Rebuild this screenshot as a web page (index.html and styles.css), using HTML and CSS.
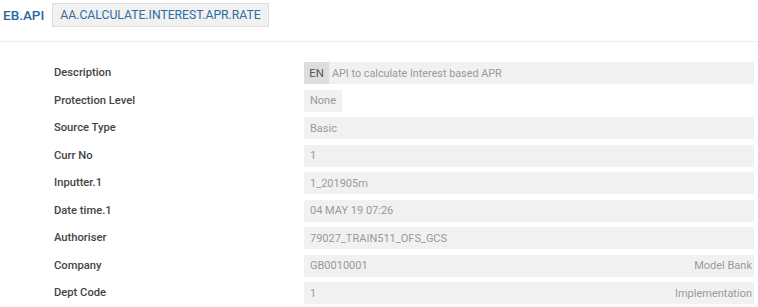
FILE: index.html
```html
<!DOCTYPE html>
<html>
<head>
<meta charset="utf-8">
<link rel="stylesheet" href="styles.css">
</head>
<body>
<div class="header">
  <span class="app">EB.API</span>
  <span class="recid">AA.CALCULATE.INTEREST.APR.RATE</span>
</div>
<div class="form">
  <div class="label">Description</div>
  <div class="field"><span class="lang">EN</span><span class="val desc">API to calculate Interest based APR</span></div>
  <div class="label">Protection Level</div>
  <div class="field-wrap"><div class="field short"><span class="val">None</span></div></div>
  <div class="label">Source Type</div>
  <div class="field"><span class="val">Basic</span></div>
  <div class="label">Curr No</div>
  <div class="field"><span class="val">1</span></div>
  <div class="label">Inputter.1</div>
  <div class="field"><span class="val">1_201905m</span></div>
  <div class="label">Date time.1</div>
  <div class="field"><span class="val">04 MAY 19 07:26</span></div>
  <div class="label">Authoriser</div>
  <div class="field"><span class="val">79027_TRAIN511_OFS_GCS</span></div>
  <div class="label">Company</div>
  <div class="field"><span class="val">GB0010001</span><span class="enri">Model Bank</span></div>
  <div class="label">Dept Code</div>
  <div class="field"><span class="val">1</span><span class="enri">Implementation</span></div>
</div>
</body>
</html>
```
FILE: styles.css
```css
html, body {
  margin: 0;
  padding: 0;
  background: #fff;
  font-family: Roboto, "Liberation Sans", sans-serif;
}
.header {
  display: flex;
  align-items: center;
  gap: 8px;
  height: 30px;
  padding: 0 0 11px 3px;
  border-bottom: 1px solid #eeeeee;
}
.app {
  font-size: 13.5px;
  font-weight: 500;
  color: #2b66a0;
}
.recid {
  display: inline-block;
  height: 22px;
  line-height: 22px;
  padding: 0 7px;
  background: #f1f1f1;
  border: 1px solid #dddddd;
  font-size: 12.2px;
  color: #2e6ca4;
}
.form {
  display: grid;
  grid-template-columns: 250px 450px;
  row-gap: 5.5px;
  padding: 20px 0 0 54px;
}
.label {
  height: 22px;
  line-height: 22px;
  font-size: 11.2px;
  font-weight: 500;
  color: #444;
}
.field {
  display: flex;
  align-items: center;
  height: 22px;
  background: #f1f1f1;
  font-size: 11px;
  color: #999;
}
.field-wrap {
  display: flex;
}
.field.short {
  display: inline-flex;
}
.lang {
  background: #dddddd;
  color: #555;
  height: 22px;
  line-height: 22px;
  width: 25px;
  text-align: center;
  font-size: 11.5px;
}
.val {
  padding: 0 6px;
}
.val.desc {
  padding-left: 3px;
  font-size: 10.8px;
}
.enri {
  margin-left: auto;
  padding-right: 2px;
}
```
